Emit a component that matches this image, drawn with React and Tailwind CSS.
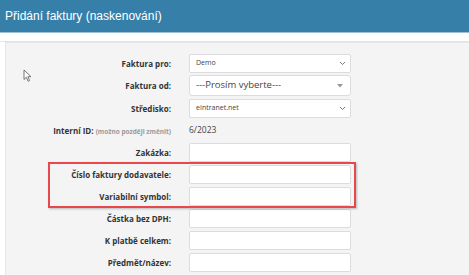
import React from "react";

const Chevron = () => (
  <svg width="7" height="5" viewBox="0 0 7 5" className="text-[#777]">
    <path d="M1 1l2.5 2.5L6 1" fill="none" stroke="currentColor" strokeWidth="1" />
  </svg>
);

const Caret = () => (
  <svg width="6" height="4" viewBox="0 0 6 4">
    <path d="M0 0h6L3 3.5z" fill="#999" />
  </svg>
);

const Row = ({ label, children, tall }) => (
  <div className={`flex items-center ${tall ? "h-[21px]" : "h-[19px]"}`}>
    <div className="w-[165px] shrink-0 text-right text-[8px] font-bold text-[#333]">
      {label}
    </div>
    <div className="ml-[18px] w-[162px] h-full">{children}</div>
  </div>
);

const Input = () => (
  <div className="w-full h-full bg-white border border-[#dcdce0] rounded-[2px]" />
);

export default function App() {
  return (
    <div
      className="w-[469px] h-[275px] overflow-hidden bg-white"
      style={{ fontFamily: '"Open Sans", "Liberation Sans", sans-serif' }}
    >
      {/* header */}
      <div className="h-[33px] bg-[#367fa9] flex items-center px-[5px] border-b border-[#9dc0d6]">
        <span
          className="text-white text-[12px]"
          style={{ fontFamily: '"Liberation Sans", Arial, sans-serif' }}
        >
          Přidání faktury (naskenování)
        </span>
      </div>
      <div className="h-[9px] bg-white border-b border-[#e3e3e3]" />

      {/* panel */}
      <div className="relative ml-[5px] h-[240px] bg-[#f4f4f4] border-l border-t border-[#e6e6e6] pt-[11px] flex flex-col gap-[3px]">
        <svg
          className="absolute left-[17px] top-[26px]"
          width="10"
          height="13"
          viewBox="0 0 10 13"
        >
          <path
            d="M1 1v9.5l2.3-2.2 1.8 3.9 1.5-.7-1.8-3.8h3.2z"
            fill="white"
            stroke="#666"
            strokeWidth="0.9"
            strokeLinejoin="round"
          />
        </svg>

        <Row label="Faktura pro:">
          <div className="w-full h-full bg-white border border-[#dcdce0] rounded-[2px] flex items-center justify-between pl-[6px] pr-[4px]">
            <span className="text-[7px] text-[#444]">Demo</span>
            <Chevron />
          </div>
        </Row>
        <div className="-mt-[1px]">
          <Row label="Faktura od:" tall>
            <div className="w-full h-full bg-white border border-[#dcdce0] rounded-[3px] flex items-center justify-between pl-[6px] pr-[7px]">
              <span className="text-[9.5px] text-[#444]">---Prosím vyberte---</span>
              <Caret />
            </div>
          </Row>
        </div>
        <Row label="Středisko:">
          <div className="w-full h-full bg-white border border-[#dcdce0] rounded-[2px] flex items-center justify-between pl-[6px] pr-[4px]">
            <span className="text-[7px] text-[#444]">eIntranet.net</span>
            <Chevron />
          </div>
        </Row>
        <Row
          label={
            <span>
              Interní ID:{" "}
              <span className="text-[6.5px] text-[#999]">(možno později změnit)</span>
            </span>
          }
        >
          <div className="h-full flex items-center text-[8.5px] text-[#444]">6/2023</div>
        </Row>
        <Row label="Zakázka:">
          <Input />
        </Row>
        <Row label="Číslo faktury dodavatele:">
          <Input />
        </Row>
        <Row label="Variabilní symbol:">
          <Input />
        </Row>
        <Row label="Částka bez DPH:">
          <Input />
        </Row>
        <Row label="K platbě celkem:">
          <Input />
        </Row>
        <Row label="Předmět/název:">
          <Input />
        </Row>

        {/* highlight box */}
        <div className="absolute left-[42px] top-[119px] w-[308px] h-[46px] border-2 border-[#e8474c] shadow-[1px_1px_2px_rgba(0,0,0,0.25)]" />
      </div>
    </div>
  );
}
